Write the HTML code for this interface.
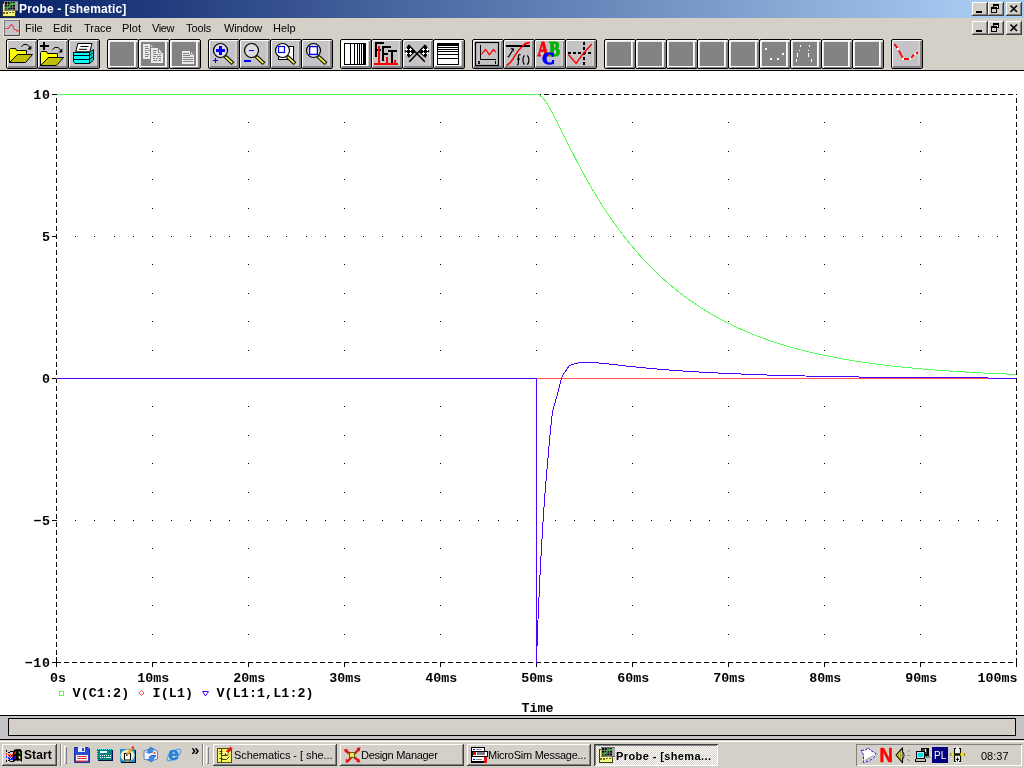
<!DOCTYPE html>
<html><head><meta charset="utf-8"><title>Probe - [shematic]</title>
<style>
html,body{margin:0;padding:0;}
body{width:1024px;height:768px;overflow:hidden;background:#fff;position:relative;font-family:"Liberation Sans",sans-serif;font-size:11px;color:#000;}
#root{position:absolute;left:0;top:0;width:1024px;height:768px;will-change:transform;}
.a{position:absolute;}
.ui{position:absolute;white-space:nowrap;font-size:11px;line-height:13px;}
#title{left:0;top:0;width:1024px;height:18px;background:linear-gradient(to right,#0a246a 0%,#0a246a 2%,#a6caf0 95%,#a6caf0 100%);}
#menubar{left:0;top:18px;width:1024px;height:52px;background:#d4d0c8;}
.cb{position:absolute;width:16px;height:14px;box-sizing:border-box;background:#d4d0c8;box-shadow:inset -1px -1px 0 #404040,inset 1px 1px 0 #fff,inset -2px -2px 0 #808080;}
.tb{position:absolute;top:39px;width:32px;height:30px;box-sizing:border-box;border:1px solid #000;border-radius:2px;background:#c6c3c6;box-shadow:inset 1px 1px 0 #fff,inset -2px -2px 0 #848288,inset -4px 0 0 #d4d0c8;}
.td{position:absolute;top:39px;width:32px;height:30px;box-sizing:border-box;border:1px solid #000;border-radius:2px;background:#848284;box-shadow:inset 1px 1px 0 #fff,inset 2px 2px 0 #e9e6e0,inset -2px -1px 0 #848284,inset 0 -2px 0 #fff,inset -3px 0 0 #e9e6e0,inset -4px 0 0 #fff;}
.tb svg,.td svg{position:absolute;left:-1px;top:-1px;width:32px;height:30px;overflow:visible;}
.m{font-family:"Liberation Mono",monospace;font-weight:bold;font-size:13.33px;}
svg text{font-family:"Liberation Mono",monospace;font-weight:bold;font-size:13.33px;fill:#000;}
.task{position:absolute;top:744px;height:22px;box-sizing:border-box;background:#d4d0c8;box-shadow:inset -1px -1px 0 #404040,inset 1px 1px 0 #fff,inset -2px -2px 0 #808080;}
.task span,.taskp span{position:absolute;top:4px;white-space:nowrap;font-size:11px;line-height:13px;}
.taskp{position:absolute;top:744px;height:22px;box-sizing:border-box;background:#fff;background-image:conic-gradient(#d4d0c8 25%,#fff 0 50%,#d4d0c8 0 75%,#fff 0);background-size:2px 2px;box-shadow:inset 1px 1px 0 #404040,inset -1px -1px 0 #fff,inset 2px 2px 0 #808080;}
</style></head>
<body>
<div id="root">
<div id="title" class="a"></div>
<div id="menubar" class="a"></div>
<svg class="a" style="left:2px;top:1px" width="16" height="16" viewBox="0 0 16 16">
<rect x="0.5" y="2.5" width="13" height="13" fill="#f8f880" stroke="#3a3a10" stroke-width="1"/>
<path d="M1 11.5h13M1 12.5h6" stroke="#6a6a20" stroke-width="1" stroke-dasharray="2 1"/>
<rect x="2" y="0" width="14" height="10" fill="#a4a4a4"/>
<path d="M2 0.5h14M2 9.5h14" stroke="#707070"/>
<rect x="3" y="1" width="10" height="7.5" fill="#000"/>
<path d="M5.5 1v7.5M8 1v7.5M10.5 1v7.5M3 3.5h10M3 6h10" stroke="#8a8a8a" stroke-width="0.8"/>
<polyline points="3.2,7.2 6.5,6.6 8,4.5 9,2.2 10.2,3.6 11.5,2.6 13,2" fill="none" stroke="#30d030" stroke-width="1.2"/>
<path d="M8.5 9.5l1 2l0.5 -2z" fill="#fff"/>
</svg>
<div class="ui" style="left:19px;top:3px;color:#fff;font-weight:bold;font-size:12px;letter-spacing:0.15px" id="ttext">Probe - [shematic]</div>
<div class="cb" style="left:972px;top:2px"><svg class="a" style="left:0;top:0" width="16" height="14" shape-rendering="crispEdges"><rect x="4" y="9" width="6" height="2" fill="#000"/></svg></div>
<div class="cb" style="left:988px;top:2px"><svg class="a" style="left:0;top:0" width="16" height="14" shape-rendering="crispEdges"><path d="M5 2h6v2h-6zM5 4h1v1h-1zM10 4h1v3h-1zM9 6h1v1h-1z" fill="#000"/><path d="M3 5h6v2h-6zM3 7h1v4h-1zM8 7h1v4h-1zM3 10h6v1h-6z" fill="#000"/></svg></div>
<div class="cb" style="left:1006px;top:2px"><svg class="a" style="left:0;top:0" width="16" height="14" shape-rendering="crispEdges"><path d="M4 3l6.5 6.5M10.5 3l-6.5 6.5" stroke="#000" stroke-width="1.6" shape-rendering="auto" transform="translate(0.5,0.5)"/></svg></div>
<div class="cb" style="left:972px;top:21px"><svg class="a" style="left:0;top:0" width="16" height="14" shape-rendering="crispEdges"><rect x="4" y="9" width="6" height="2" fill="#000"/></svg></div>
<div class="cb" style="left:988px;top:21px"><svg class="a" style="left:0;top:0" width="16" height="14" shape-rendering="crispEdges"><path d="M5 2h6v2h-6zM5 4h1v1h-1zM10 4h1v3h-1zM9 6h1v1h-1z" fill="#000"/><path d="M3 5h6v2h-6zM3 7h1v4h-1zM8 7h1v4h-1zM3 10h6v1h-6z" fill="#000"/></svg></div>
<div class="cb" style="left:1006px;top:21px"><svg class="a" style="left:0;top:0" width="16" height="14" shape-rendering="crispEdges"><path d="M4 3l6.5 6.5M10.5 3l-6.5 6.5" stroke="#000" stroke-width="1.6" shape-rendering="auto" transform="translate(0.5,0.5)"/></svg></div>
<div class="a" style="left:0;top:70px;width:1024px;height:1px;background:#000"></div>
<svg class="a" style="left:3px;top:19px" width="18" height="18" viewBox="-1 -1 18 18">
<rect x="-1" y="-1" width="18" height="18" fill="#e4e1da"/>
<rect x="0" y="0" width="16" height="16" fill="#c8c6ca"/>
<path d="M0 0.5h16M0.5 0v16" stroke="#7c7c7c"/>
<path d="M0 15.5h16M15.5 0v16" stroke="#484848"/>
<path d="M4 1v2M10 1v2M4 13v2M10 13v2M1 6.5h2M4 6.5h2M10 6.5h2M13 6.5h2M1 12h2M4 12h2M7 12h2" stroke="#bdbdc4" stroke-width="0.8"/>
<polyline points="1,8.5 4.5,8.5 6.3,5.6 7.5,4.4 9.3,6.2 9.4,8.6 10.5,9.5 12,9.6 13.5,11.5 14.8,10.3" fill="none" stroke="#e84048" stroke-width="1.1" stroke-linejoin="round"/>
</svg>
<div class="ui" id="m0" style="left:25px;top:22px;letter-spacing:0px">File</div>
<div class="ui" id="m1" style="left:53px;top:22px;letter-spacing:0px">Edit</div>
<div class="ui" id="m2" style="left:84px;top:22px;letter-spacing:0px">Trace</div>
<div class="ui" id="m3" style="left:122px;top:22px;letter-spacing:0px">Plot</div>
<div class="ui" id="m4" style="left:152px;top:22px;letter-spacing:-0.4px">View</div>
<div class="ui" id="m5" style="left:186px;top:22px;letter-spacing:-0.1px">Tools</div>
<div class="ui" id="m6" style="left:224px;top:22px;letter-spacing:-0.2px">Window</div>
<div class="ui" id="m7" style="left:273px;top:22px;letter-spacing:0px">Help</div>
<div class="tb" style="left:6px"><svg viewBox="0 0 32 30">
<path d="M3.5 23.5V10.5L4.5 9.5H9.5L10.5 11.5H20.5V15.5H11.5L3.5 23.5Z" fill="#ffff00" stroke="#000" stroke-width="1" stroke-linejoin="round"/>
<path d="M3.5 23.5L11.5 15.5H26.5L19.5 23.5Z" fill="#c0c000" stroke="#000" stroke-width="1" stroke-linejoin="round"/>
<path d="M15.3 7.7L17.8 5.5H21.2L24.3 9" fill="none" stroke="#000" stroke-width="1"/>
<path d="M21.3 10.6H25.3V6.6Z" fill="#000"/>
</svg></div>
<div class="tb" style="left:37px"><svg viewBox="0 0 32 30"><g transform="translate(0,3)">
<path d="M3.5 23.5V10.5L4.5 9.5H9.5L10.5 11.5H20.5V15.5H11.5L3.5 23.5Z" fill="#ffff00" stroke="#000" stroke-width="1" stroke-linejoin="round"/>
<path d="M3.5 23.5L11.5 15.5H26.5L19.5 23.5Z" fill="#c0c000" stroke="#000" stroke-width="1" stroke-linejoin="round"/>
<path d="M15.3 7.7L17.8 5.5H21.2L24.3 9" fill="none" stroke="#000" stroke-width="1"/>
<path d="M21.3 10.6H25.3V6.6Z" fill="#000"/>
</g><path d="M3 6h9v2h-9zM6 3h2v8h-2z" fill="#000" shape-rendering="crispEdges"/></svg></div>
<div class="tb" style="left:68px"><svg viewBox="0 0 32 30">
<path d="M5.5 13.5H21.5V24.5H7L5.5 22.5Z" fill="#00ffff" stroke="#000" stroke-width="1" stroke-linejoin="round"/>
<path d="M21.5 13.5L25.5 10.5V21L21.5 24.5Z" fill="#00d8d8" stroke="#000" stroke-width="1" stroke-linejoin="round"/>
<path d="M5.5 16.5H21.5L25.5 13.5M5.5 20.5H21.5L25.5 17.3" fill="none" stroke="#000" stroke-width="1"/>
<path d="M9.8 4.5H23.9L21.9 12.8H7.8Z" fill="#fff" stroke="#000" stroke-width="1" stroke-linejoin="round"/>
<path d="M12.5 7.5H20.5M11 10.3H19" stroke="#000" stroke-width="1"/>
</svg></div>
<div class="td" style="left:107px"></div>
<div class="td" style="left:138px"><svg viewBox="0 0 32 30" shape-rendering="crispEdges">
<path d="M5 5h7v15h-7z" fill="#eceae6"/>
<path d="M13 6l2 2h-2z" fill="#eceae6" shape-rendering="auto"/>
<path d="M7 7h3M7 9h4M7 11h2M10 11h2M7 13h3M7 15h4M7 17h3" stroke="#848284" stroke-width="1" transform="translate(0,0.5)"/>
<path d="M13 9h7v5h5v10h-12z" fill="#eceae6"/>
<path d="M21 10l3 3.5h-3z" fill="#eceae6" shape-rendering="auto"/>
<path d="M15 11h4M15 13h3M15 15h5M21 15h2M15 17h3M19 17h4M15 19h2M18 19h2M21 19h2M15 21h4M20 21h3" stroke="#848284" stroke-width="1" transform="translate(0,0.5)"/>
</svg></div>
<div class="td" style="left:169px"><svg viewBox="0 0 32 30" shape-rendering="crispEdges">
<path d="M13 12h8v4h4v9h-12z" fill="#eceae6"/>
<path d="M22 13l2.5 2.5h-2.5z" fill="#eceae6" shape-rendering="auto"/>
<path d="M14 14h6M14 16h7M14 18h10M14 20h10M14 22h10" stroke="#848284" stroke-width="1" transform="translate(0,0.5)"/>
</svg></div>
<div class="tb" style="left:208px"><svg viewBox="0 0 32 30">
<circle cx="12.5" cy="11.5" r="7" fill="#dcdce0" stroke="#000" stroke-width="1.2"/>
<path d="M17.2 17.4L25 24.6" stroke="#000" stroke-width="4" stroke-linecap="butt"/>
<path d="M17.6 17.8L24.4 24.1" stroke="#ffff40" stroke-width="1.8" stroke-linecap="butt"/>
<path d="M8 10h9v3h-9zM11 7h3v9h-3z" fill="#0000ff" shape-rendering="crispEdges"/><path d="M5 21h5v1h-5zM7 19h1v5h-1z" fill="#0000ff" shape-rendering="crispEdges"/></svg></div>
<div class="tb" style="left:239px"><svg viewBox="0 0 32 30">
<circle cx="12.5" cy="11.5" r="7" fill="#dcdce0" stroke="#000" stroke-width="1.2"/>
<path d="M17.2 17.4L25 24.6" stroke="#000" stroke-width="4" stroke-linecap="butt"/>
<path d="M17.6 17.8L24.4 24.1" stroke="#ffff40" stroke-width="1.8" stroke-linecap="butt"/>
<path d="M10 11h5v1h-5z" fill="#0000ff" shape-rendering="crispEdges"/><path d="M5 21h7v2h-7z" fill="#0000ff" shape-rendering="crispEdges"/></svg></div>
<div class="tb" style="left:270px"><svg viewBox="0 0 32 30">
<rect x="8.5" y="7.5" width="15" height="13" fill="#fff" stroke="#000" stroke-width="1"/>
<circle cx="12.5" cy="11.5" r="7" fill="#fff" stroke="#000" stroke-width="1.2"/>
<rect x="8.5" y="7.5" width="6" height="6" fill="#fff" stroke="#0000ff" stroke-width="1.2"/>
<path d="M17.2 17.4L25 24.6" stroke="#000" stroke-width="4" stroke-linecap="butt"/>
<path d="M17.6 17.8L24.4 24.1" stroke="#ffff40" stroke-width="1.8" stroke-linecap="butt"/>
</svg></div>
<div class="tb" style="left:301px"><svg viewBox="0 0 32 30">
<circle cx="12.5" cy="11.5" r="7" fill="#dcdce0" stroke="#000" stroke-width="1.2"/>
<rect x="8.6" y="7.6" width="7.8" height="7.8" fill="#fff" stroke="#0000ff" stroke-width="1.3"/>
<path d="M17.2 17.4L25 24.6" stroke="#000" stroke-width="4" stroke-linecap="butt"/>
<path d="M17.6 17.8L24.4 24.1" stroke="#ffff40" stroke-width="1.8" stroke-linecap="butt"/>
</svg></div>
<div class="tb" style="left:340px"><svg viewBox="0 0 32 30" shape-rendering="crispEdges">
<rect x="2" y="2" width="26" height="25" fill="#fff"/>
<rect x="4.5" y="4.5" width="21" height="21" fill="none" stroke="#000" stroke-width="1"/>
<path d="M10.5 5v20M14.5 5v20M17.5 5v20M19.5 5v20M21.5 5v20" stroke="#000" stroke-width="1"/>
<rect x="23" y="4" width="3" height="22" fill="#000"/>
</svg></div>
<div class="tb" style="left:371px"><svg viewBox="0 0 32 30" shape-rendering="crispEdges">
<path d="M4 3h9v2h-7v5h4v2h-4v6h-2z" fill="#000"/>
<path d="M11 7h9v2h-7v5h4v2h-4v6h-2z" fill="#000"/>
<path d="M17 11h9v2h-4v11h-2v-11h-3z" fill="#000"/>
<path d="M3 24h24v2h-24zM7 7h2v17h-2zM15 18h2v6h-2zM23 21h2v3h-2z" fill="#ff0000"/>
</svg></div>
<div class="tb" style="left:402px"><svg viewBox="0 0 32 30">
<path d="M7.3 22.8L23.3 6M22.8 22.8L6.6 6" stroke="#000" stroke-width="1.6" fill="none"/>
<path d="M6.5 5.5L2.6 11.5L6.5 19L13 13.2Z" fill="#000"/>
<path d="M23.5 5.5L27.4 11.5L23.5 19L17 13.2Z" fill="#000"/>
<path d="M4 9h1v3h-1zM3 10h3v1h-3zM8 9h1v3h-1zM7 10h3v1h-3zM4 13h1v3h-1zM3 14h3v1h-3zM8 13h1v3h-1zM7 14h3v1h-3zM21 9h1v3h-1zM20 10h3v1h-3zM25 9h1v3h-1zM24 10h3v1h-3zM21 13h1v3h-1zM20 14h3v1h-3zM25 13h1v3h-1zM24 14h3v1h-3z" fill="#fff" shape-rendering="crispEdges"/>
</svg></div>
<div class="tb" style="left:433px"><svg viewBox="0 0 32 30" shape-rendering="crispEdges">
<rect x="2" y="2" width="26" height="25" fill="#fff"/>
<rect x="4.5" y="4.5" width="21" height="21" fill="none" stroke="#000" stroke-width="1"/>
<rect x="4" y="4" width="22" height="3" fill="#000"/>
<path d="M5 8.5h20M5 10.5h20M5 12.5h20M5 15.5h20M5 19.5h20" stroke="#000" stroke-width="1"/>
</svg></div>
<div class="tb" style="left:472px"><svg viewBox="0 0 32 30">
<rect x="3.5" y="3.5" width="23" height="23" fill="none" stroke="#000" stroke-width="1.2"/>
<path d="M8.5 6v14.5H24" fill="none" stroke="#000" stroke-width="1" shape-rendering="crispEdges"/>
<polyline points="9.3,15.4 13.5,10.5 17.3,15.7 21.5,10.5 23.8,13.2" fill="none" stroke="#ff0000" stroke-width="1.2"/>
<path d="M6 22h2v3h-2zM23 22h1v3h-1z" fill="#000" shape-rendering="crispEdges"/>
<path d="M6.7 22.7h0.6v1.6h-0.6z" fill="#c6c3c6"/>
</svg></div>
<div class="tb" style="left:503px"><svg viewBox="0 0 32 30">
<path d="M3.4 26.4C7 25 9.5 21 12.1 16.3S15.5 10.8 18.6 8S23 4 26.6 3.4" fill="none" stroke="#ff0000" stroke-width="1.5"/>
<rect x="3" y="6" width="24" height="2" fill="#000" shape-rendering="crispEdges"/>
<path d="M19 7.6L22.4 4.4L26.6 3.4" fill="none" stroke="#ff0000" stroke-width="1.5"/>
<path d="M7.3 9.3h3.6v3.4z" fill="#000"/>
<path d="M9.4 11.6L5.8 17.6h-1.2" fill="none" stroke="#000" stroke-width="1.1"/>
<path d="M17.6 15.8c-1.6-0.6-2.2 0.4-2.2 1.6v6.6c0 1.4-0.4 2-1.6 2M14 20.2h3" fill="none" stroke="#000" stroke-width="1.2"/>
<path d="M21.4 16.4c-2 2.6-2 6.6 0 9.2M24.4 16.4c2 2.6 2 6.6 0 9.2" fill="none" stroke="#000" stroke-width="1.2"/>
</svg></div>
<div class="tb" style="left:534px"><svg viewBox="0 0 32 30">
<text x="0" y="0" transform="translate(3.4,16.6) scale(0.76,1)" style="font-family:'Liberation Serif',serif;font-weight:bold;font-size:20px;fill:#ff0000;stroke:#ff0000;stroke-width:1.1px">A</text>
<text x="0" y="0" transform="translate(15.2,16.6) scale(0.8,1)" style="font-family:'Liberation Serif',serif;font-weight:bold;font-size:20px;fill:#00b000;stroke:#00b000;stroke-width:1.1px">B</text>
<text x="0" y="0" transform="translate(8.2,24.6) scale(1.08,1)" style="font-family:'Liberation Serif',serif;font-weight:bold;font-size:16px;fill:#0000ff;stroke:#0000ff;stroke-width:1.4px">C</text>
</svg></div>
<div class="tb" style="left:565px"><svg viewBox="0 0 32 30">
<path d="M3 14h23" stroke="#000" stroke-width="2" stroke-dasharray="3 2" shape-rendering="crispEdges"/>
<path d="M19 3v23" stroke="#000" stroke-width="2" stroke-dasharray="3 2" shape-rendering="crispEdges"/>
<polyline points="3.4,15.4 11.1,24.4 18.6,14.1 26.9,5" fill="none" stroke="#ff0000" stroke-width="1.5"/>
</svg></div>
<div class="td" style="left:604px"></div>
<div class="td" style="left:635px"></div>
<div class="td" style="left:666px"></div>
<div class="td" style="left:697px"></div>
<div class="td" style="left:728px"></div>
<div class="td" style="left:759px"><svg viewBox="0 0 32 30" shape-rendering="crispEdges"><path d="M6 9h2v2h-2zM11 19h2v2h-2zM18 19h2v2h-2zM23 14h2v2h-2z" fill="#fff"/></svg></div>
<div class="td" style="left:790px"><svg viewBox="0 0 32 30" shape-rendering="crispEdges"><path d="M10 6h1v2h-1zM19 6h1v2h-1zM9 11h1v1h-1zM18 11h1v1h-1zM7 14h1v4h-1zM18 14h1v4h-1zM6 20h1v3h-1zM21 20h1v3h-1z" fill="#fff"/></svg></div>
<div class="td" style="left:821px"></div>
<div class="td" style="left:852px"></div>
<div class="tb" style="left:891px"><svg viewBox="0 0 32 30">
<path d="M3.4 5.2L6.6 9M7.8 11.3L11.6 18.6M20.4 18.6L23 15.4" stroke="#ff0000" stroke-width="1.8" fill="none"/>
<path d="M13 19h5v2h-5zM25 13h2v2h-2z" fill="#ff0000" shape-rendering="crispEdges"/>
<path d="M6 9h2v2h-2zM11 19h2v2h-2zM18 19h2v2h-2zM23 14h2v2h-2z" fill="#fff" shape-rendering="crispEdges"/>
</svg></div>
<svg class="a" style="left:0;top:71px" width="1024" height="644" viewBox="0 71 1024 644">
<g fill="#000" shape-rendering="crispEdges">
<path d="M75 236h1v1h-1zM75 378h1v1h-1zM75 520h1v1h-1zM94 236h1v1h-1zM94 378h1v1h-1zM94 520h1v1h-1zM114 236h1v1h-1zM114 378h1v1h-1zM114 520h1v1h-1zM133 236h1v1h-1zM133 378h1v1h-1zM133 520h1v1h-1zM152 122h1v1h-1zM152 151h1v1h-1zM152 179h1v1h-1zM152 208h1v1h-1zM152 236h1v1h-1zM152 264h1v1h-1zM152 293h1v1h-1zM152 321h1v1h-1zM152 350h1v1h-1zM152 378h1v1h-1zM152 406h1v1h-1zM152 435h1v1h-1zM152 463h1v1h-1zM152 492h1v1h-1zM152 520h1v1h-1zM152 548h1v1h-1zM152 577h1v1h-1zM152 605h1v1h-1zM152 634h1v1h-1zM171 236h1v1h-1zM171 378h1v1h-1zM171 520h1v1h-1zM190 236h1v1h-1zM190 378h1v1h-1zM190 520h1v1h-1zM210 236h1v1h-1zM210 378h1v1h-1zM210 520h1v1h-1zM229 236h1v1h-1zM229 378h1v1h-1zM229 520h1v1h-1zM248 122h1v1h-1zM248 151h1v1h-1zM248 179h1v1h-1zM248 208h1v1h-1zM248 236h1v1h-1zM248 264h1v1h-1zM248 293h1v1h-1zM248 321h1v1h-1zM248 350h1v1h-1zM248 378h1v1h-1zM248 406h1v1h-1zM248 435h1v1h-1zM248 463h1v1h-1zM248 492h1v1h-1zM248 520h1v1h-1zM248 548h1v1h-1zM248 577h1v1h-1zM248 605h1v1h-1zM248 634h1v1h-1zM267 236h1v1h-1zM267 378h1v1h-1zM267 520h1v1h-1zM286 236h1v1h-1zM286 378h1v1h-1zM286 520h1v1h-1zM306 236h1v1h-1zM306 378h1v1h-1zM306 520h1v1h-1zM325 236h1v1h-1zM325 378h1v1h-1zM325 520h1v1h-1zM344 122h1v1h-1zM344 151h1v1h-1zM344 179h1v1h-1zM344 208h1v1h-1zM344 236h1v1h-1zM344 264h1v1h-1zM344 293h1v1h-1zM344 321h1v1h-1zM344 350h1v1h-1zM344 378h1v1h-1zM344 406h1v1h-1zM344 435h1v1h-1zM344 463h1v1h-1zM344 492h1v1h-1zM344 520h1v1h-1zM344 548h1v1h-1zM344 577h1v1h-1zM344 605h1v1h-1zM344 634h1v1h-1zM363 236h1v1h-1zM363 378h1v1h-1zM363 520h1v1h-1zM382 236h1v1h-1zM382 378h1v1h-1zM382 520h1v1h-1zM402 236h1v1h-1zM402 378h1v1h-1zM402 520h1v1h-1zM421 236h1v1h-1zM421 378h1v1h-1zM421 520h1v1h-1zM440 122h1v1h-1zM440 151h1v1h-1zM440 179h1v1h-1zM440 208h1v1h-1zM440 236h1v1h-1zM440 264h1v1h-1zM440 293h1v1h-1zM440 321h1v1h-1zM440 350h1v1h-1zM440 378h1v1h-1zM440 406h1v1h-1zM440 435h1v1h-1zM440 463h1v1h-1zM440 492h1v1h-1zM440 520h1v1h-1zM440 548h1v1h-1zM440 577h1v1h-1zM440 605h1v1h-1zM440 634h1v1h-1zM459 236h1v1h-1zM459 378h1v1h-1zM459 520h1v1h-1zM478 236h1v1h-1zM478 378h1v1h-1zM478 520h1v1h-1zM498 236h1v1h-1zM498 378h1v1h-1zM498 520h1v1h-1zM517 236h1v1h-1zM517 378h1v1h-1zM517 520h1v1h-1zM536 122h1v1h-1zM536 151h1v1h-1zM536 179h1v1h-1zM536 208h1v1h-1zM536 236h1v1h-1zM536 264h1v1h-1zM536 293h1v1h-1zM536 321h1v1h-1zM536 350h1v1h-1zM536 378h1v1h-1zM536 406h1v1h-1zM536 435h1v1h-1zM536 463h1v1h-1zM536 492h1v1h-1zM536 520h1v1h-1zM536 548h1v1h-1zM536 577h1v1h-1zM536 605h1v1h-1zM536 634h1v1h-1zM555 236h1v1h-1zM555 378h1v1h-1zM555 520h1v1h-1zM574 236h1v1h-1zM574 378h1v1h-1zM574 520h1v1h-1zM594 236h1v1h-1zM594 378h1v1h-1zM594 520h1v1h-1zM613 236h1v1h-1zM613 378h1v1h-1zM613 520h1v1h-1zM632 122h1v1h-1zM632 151h1v1h-1zM632 179h1v1h-1zM632 208h1v1h-1zM632 236h1v1h-1zM632 264h1v1h-1zM632 293h1v1h-1zM632 321h1v1h-1zM632 350h1v1h-1zM632 378h1v1h-1zM632 406h1v1h-1zM632 435h1v1h-1zM632 463h1v1h-1zM632 492h1v1h-1zM632 520h1v1h-1zM632 548h1v1h-1zM632 577h1v1h-1zM632 605h1v1h-1zM632 634h1v1h-1zM651 236h1v1h-1zM651 378h1v1h-1zM651 520h1v1h-1zM670 236h1v1h-1zM670 378h1v1h-1zM670 520h1v1h-1zM690 236h1v1h-1zM690 378h1v1h-1zM690 520h1v1h-1zM709 236h1v1h-1zM709 378h1v1h-1zM709 520h1v1h-1zM728 122h1v1h-1zM728 151h1v1h-1zM728 179h1v1h-1zM728 208h1v1h-1zM728 236h1v1h-1zM728 264h1v1h-1zM728 293h1v1h-1zM728 321h1v1h-1zM728 350h1v1h-1zM728 378h1v1h-1zM728 406h1v1h-1zM728 435h1v1h-1zM728 463h1v1h-1zM728 492h1v1h-1zM728 520h1v1h-1zM728 548h1v1h-1zM728 577h1v1h-1zM728 605h1v1h-1zM728 634h1v1h-1zM747 236h1v1h-1zM747 378h1v1h-1zM747 520h1v1h-1zM766 236h1v1h-1zM766 378h1v1h-1zM766 520h1v1h-1zM786 236h1v1h-1zM786 378h1v1h-1zM786 520h1v1h-1zM805 236h1v1h-1zM805 378h1v1h-1zM805 520h1v1h-1zM824 122h1v1h-1zM824 151h1v1h-1zM824 179h1v1h-1zM824 208h1v1h-1zM824 236h1v1h-1zM824 264h1v1h-1zM824 293h1v1h-1zM824 321h1v1h-1zM824 350h1v1h-1zM824 378h1v1h-1zM824 406h1v1h-1zM824 435h1v1h-1zM824 463h1v1h-1zM824 492h1v1h-1zM824 520h1v1h-1zM824 548h1v1h-1zM824 577h1v1h-1zM824 605h1v1h-1zM824 634h1v1h-1zM843 236h1v1h-1zM843 378h1v1h-1zM843 520h1v1h-1zM862 236h1v1h-1zM862 378h1v1h-1zM862 520h1v1h-1zM882 236h1v1h-1zM882 378h1v1h-1zM882 520h1v1h-1zM901 236h1v1h-1zM901 378h1v1h-1zM901 520h1v1h-1zM920 122h1v1h-1zM920 151h1v1h-1zM920 179h1v1h-1zM920 208h1v1h-1zM920 236h1v1h-1zM920 264h1v1h-1zM920 293h1v1h-1zM920 321h1v1h-1zM920 350h1v1h-1zM920 378h1v1h-1zM920 406h1v1h-1zM920 435h1v1h-1zM920 463h1v1h-1zM920 492h1v1h-1zM920 520h1v1h-1zM920 548h1v1h-1zM920 577h1v1h-1zM920 605h1v1h-1zM920 634h1v1h-1zM939 236h1v1h-1zM939 378h1v1h-1zM939 520h1v1h-1zM958 236h1v1h-1zM958 378h1v1h-1zM958 520h1v1h-1zM978 236h1v1h-1zM978 378h1v1h-1zM978 520h1v1h-1zM997 236h1v1h-1zM997 378h1v1h-1zM997 520h1v1h-1z"/>
</g>
<g stroke="#000" stroke-width="1" fill="none" shape-rendering="crispEdges">
<path d="M56.5 98V662" stroke-dasharray="5 3"/>
<path d="M1016.5 98V662" stroke-dasharray="5 3"/>
<path d="M56 94.5H1017" stroke-dasharray="5 3"/>
<path d="M56 662.5H1017" stroke-dasharray="5 3"/>
<path d="M52 94.5H57"/>
<path d="M52 236.5H57"/>
<path d="M52 378.5H57"/>
<path d="M52 520.5H57"/>
<path d="M52 662.5H57"/>
<path d="M56.5 662V667"/>
<path d="M152.5 662V667"/>
<path d="M248.5 662V667"/>
<path d="M344.5 662V667"/>
<path d="M440.5 662V667"/>
<path d="M536.5 662V667"/>
<path d="M632.5 662V667"/>
<path d="M728.5 662V667"/>
<path d="M824.5 662V667"/>
<path d="M920.5 662V667"/>
<path d="M1016.5 662V667"/>
<path d="M56.5 657V667"/>
</g>
<polyline fill="none" stroke="#55ff55" stroke-width="1" shape-rendering="crispEdges" points="56.5,94.5 539.5,94.5 539.9,95.4 542.3,97.4 544.7,100.2 547.1,103.6 549.5,107.6 551.9,111.8 554.3,116.3 556.7,121.0 561.5,130.6 566.3,140.3 571.1,149.9 575.9,159.3 580.7,168.5 585.5,177.3 590.3,185.8 595.1,193.9 599.9,201.8 604.7,209.3 609.5,216.5 614.3,223.3 623.9,236.3 633.5,248.1 643.1,259.0 652.7,268.9 662.3,278.1 671.9,286.4 681.5,294.1 691.1,301.1 700.7,307.6 710.3,313.5 719.9,318.9 729.5,323.9 739.1,328.4 748.7,332.6 758.3,336.4 767.9,339.9 777.5,343.1 787.1,346.1 796.7,348.8 806.3,351.3 815.9,353.5 825.5,355.6 835.1,357.5 844.7,359.3 854.3,360.9 863.9,362.3 873.5,363.7 883.1,364.9 892.7,366.1 902.3,367.1 911.9,368.0 921.5,368.9 931.1,369.7 940.7,370.4 950.3,371.1 959.9,371.7 969.5,372.3 979.1,372.8 988.7,373.3 998.3,373.7 1007.9,374.1 1016.5,374.4"/>
<path d="M56 378.5H1016" stroke="#ff5555" stroke-width="1" fill="none" shape-rendering="crispEdges"/>
<polyline fill="none" stroke="#5000ff" stroke-width="1" shape-rendering="crispEdges" points="56.5,378.5 536.5,378.5 536.5,662.5 537.5,631.0 538.5,609.0 539.5,586.0 540.5,565.5 541.5,547.0 542.5,531.0 543.5,514.5 544.5,499.0 545.5,486.5 546.5,475.0 547.5,463.5 548.5,452.0 549.5,441.0 550.5,429.5 551.5,420.0 552.5,413.0 553.5,408.0 554.5,404.5 555.5,401.0 556.5,397.5 557.5,394.0 558.5,390.5 559.5,386.0 560.5,381.5 561.5,378.0 562.5,375.5 563.5,374.0 569.5,365.5 572.5,364.3 575.5,363.6 579.5,362.5 594.5,362.5 598.9,363.0 603.7,363.5 613.3,364.5 622.9,365.6 632.5,366.7 642.1,367.6 651.7,368.5 666.1,369.8 680.5,370.8 694.9,371.8 709.3,372.6 728.5,373.5 747.7,374.3 766.9,375.0 786.1,375.6 805.3,376.0 824.5,376.4 843.7,376.8 872.5,377.2 901.3,377.5 930.1,377.7 958.9,377.9 987.7,378.0 1016.5,378.1"/>
<text x="50.6" y="99.0" text-anchor="end" style="letter-spacing:0.7px">10</text>
<text x="50.6" y="241.0" text-anchor="end" style="letter-spacing:0.7px">5</text>
<text x="50.6" y="383.0" text-anchor="end" style="letter-spacing:0.7px">0</text>
<text x="50.6" y="525.0" text-anchor="end" style="letter-spacing:0.7px">−5</text>
<text x="50.6" y="667.0" text-anchor="end" style="letter-spacing:0.7px">−10</text>
<text x="58.0" y="682" text-anchor="middle">0s</text>
<text x="153.2" y="682" text-anchor="middle">10ms</text>
<text x="249.2" y="682" text-anchor="middle">20ms</text>
<text x="345.2" y="682" text-anchor="middle">30ms</text>
<text x="441.2" y="682" text-anchor="middle">40ms</text>
<text x="537.2" y="682" text-anchor="middle">50ms</text>
<text x="633.2" y="682" text-anchor="middle">60ms</text>
<text x="729.2" y="682" text-anchor="middle">70ms</text>
<text x="825.2" y="682" text-anchor="middle">80ms</text>
<text x="921.2" y="682" text-anchor="middle">90ms</text>
<text x="997.5" y="682" text-anchor="middle">100ms</text>
<rect x="59.5" y="691.5" width="4" height="4" fill="none" stroke="#55ff55" shape-rendering="crispEdges"/>
<text x="72.6" y="697" style="letter-spacing:0.1px">V(C1:2)</text>
<path d="M141.5 690.5l2.5 2.5l-2.5 2.5l-2.5 -2.5z" fill="none" stroke="#ff5555" stroke-width="1"/>
<text x="152.6" y="697" style="letter-spacing:0.1px">I(L1)</text>
<path d="M202.5 691.5h6l-3 4.5z" fill="none" stroke="#5000ff" stroke-width="1"/>
<text x="216.5" y="697" style="letter-spacing:0.1px">V(L1:1,L1:2)</text>
<text x="537.4" y="712" text-anchor="middle">Time</text>
</svg>
<div class="a" style="left:0;top:715px;width:1024px;height:1px;background:#000"></div>
<div class="a" style="left:0;top:716px;width:1024px;height:23px;background:#c4c3c7"></div>
<div class="a" style="left:8px;top:718px;width:1008px;height:18px;box-sizing:border-box;border:1px solid #000;background:#d4d0c8"></div>
<div class="a" style="left:0;top:739px;width:1024px;height:1px;background:#000"></div>
<div class="a" style="left:0;top:740px;width:1024px;height:28px;background:#d4d0c8;box-shadow:inset 0 1px 0 #d4d0c8, inset 0 2px 0 #fff"></div>
<div class="task" style="left:2px;width:55px"><span style="left:22px;top:5px;font-weight:bold;font-size:12px;letter-spacing:0.1px" id="start">Start</span><svg class="a" style="left:3px;top:4px" width="18" height="16" viewBox="0 0 18 16">
<path d="M8 3.5C10 0.5 12 0.5 13 1.5C14.5 0.5 16 1 17 3.5V14.5C16 12.5 14.5 12 13 13C12 12 10 12 8 14.5Z" fill="#000"/>
<path d="M9.6 4.2L11.3 2.6L11 5.6L9.4 6.8Z" fill="#ff2020"/>
<path d="M13.4 2.6L15.2 4.2L15.3 6.8L13.6 5.6Z" fill="#20d020"/>
<path d="M9.4 8.4L11 7.4L10.8 10.2L9.3 11.6Z" fill="#2020ff"/>
<path d="M13.6 7.4L15.3 8.4L15.4 11.6L13.8 10.2Z" fill="#ffff20"/>
<g shape-rendering="crispEdges">
<path d="M1 2h1v2h-1zM1 12h1v2h-1zM3 4h2v1h-2zM5 3h3v1h-3zM3 12h2v1h-2zM5 13h3v1h-3zM4 7h1v1h-1zM6 7h1v1h-1zM4 10h1v1h-1zM6 10h1v1h-1z" fill="#000"/>
<path d="M1 5h1v2h-1zM3 6h1v2h-1zM5 6h1v1h-1zM7 6h1v2h-1zM4 8h4v1h-4z" fill="#ff2020"/>
<path d="M1 8h1v2h-1zM3 9h1v2h-1zM5 9h1v1h-1zM7 9h1v2h-1zM4 11h4v1h-4z" fill="#2020ff"/>
</g>
</svg>
</div>
<div class="a" style="left:60px;top:744px;width:1px;height:22px;background:#808080"></div><div class="a" style="left:61px;top:744px;width:1px;height:22px;background:#fff"></div><div class="a" style="left:64px;top:746px;width:3px;height:18px;box-sizing:border-box;background:#d4d0c8;box-shadow:inset 1px 1px 0 #fff,inset -1px -1px 0 #808080"></div>
<div class="a" style="left:202px;top:744px;width:1px;height:22px;background:#808080"></div><div class="a" style="left:203px;top:744px;width:1px;height:22px;background:#fff"></div><div class="a" style="left:206px;top:746px;width:3px;height:18px;box-sizing:border-box;background:#d4d0c8;box-shadow:inset 1px 1px 0 #fff,inset -1px -1px 0 #808080"></div>
<div class="a" style="left:74px;top:747px;width:16px;height:16px"><svg width="16" height="16" viewBox="0 0 16 16" style="position:absolute;left:0;top:0">
<path d="M0.5 0.5H14L15.5 2V15.5H0.5Z" fill="#2848d8" stroke="#1830a0" stroke-width="1"/>
<rect x="4" y="0" width="7" height="5" fill="#e8e8f0"/>
<rect x="8" y="1" width="2" height="3" fill="#2848d8"/>
<rect x="2" y="8" width="12" height="6" fill="#fff"/>
<path d="M3 10h10M3 12h10" stroke="#e03048" stroke-width="1" shape-rendering="crispEdges" transform="translate(0,-0.5)"/>
<rect x="2" y="13.5" width="12" height="1.5" fill="#c83040"/>
</svg></div>
<div class="a" style="left:97px;top:747px;width:16px;height:16px"><svg width="16" height="16" viewBox="0 0 16 16" style="position:absolute;left:0;top:0" shape-rendering="crispEdges">
<rect x="1" y="3" width="15" height="11" fill="#001040"/>
<rect x="0" y="2" width="15" height="11" fill="#008080"/>
<path d="M0.5 12.5V2.5H15" fill="none" stroke="#40f0f0" stroke-width="1" stroke-dasharray="1 1"/>
<rect x="3" y="4" width="7" height="2" fill="#fff"/>
<path d="M3 8.5h11M3 10.5h11" stroke="#fff" stroke-width="1" stroke-dasharray="1 1"/>
<rect x="10" y="10" width="4" height="1" fill="#fff"/>
</svg></div>
<div class="a" style="left:120px;top:747px;width:16px;height:16px"><svg width="17" height="17" viewBox="0 0 17 17" style="position:absolute;left:0;top:-1px;overflow:visible">
<rect x="1" y="4" width="15" height="13" fill="#000"/>
<rect x="0" y="3" width="15" height="13" fill="#2888c8"/>
<ellipse cx="7.5" cy="9.5" rx="7" ry="6" fill="#f0ecc0"/>
<rect x="4.5" y="7.5" width="6" height="6.5" fill="#fff" stroke="#000" stroke-width="1"/>
<path d="M7 8.5L13 1.5" stroke="#f0a020" stroke-width="2.2"/>
<path d="M12.4 2.2L13.6 0.8" stroke="#e02020" stroke-width="2.2"/>
<rect x="6" y="8.5" width="1.4" height="1.4" fill="#000"/>
</svg></div>
<div class="a" style="left:143px;top:747px;width:16px;height:16px"><svg width="16" height="17" viewBox="0 0 16 17" style="position:absolute;left:0;top:-1px;overflow:visible">
<path d="M1 5L8 2.5L14.5 5V13L8 15L1 13Z" fill="#f4f4fc" stroke="#6878c0" stroke-width="1"/>
<path d="M3.5 6.5L7.5 1L11.5 3.5L9 4.2L10 6L6.5 7.2Z" fill="#3890e8" stroke="#2060c0" stroke-width="0.6"/>
<path d="M12.5 10L8.5 16L4.5 13.5L7 12.6L6 10.8L10 9.6Z" fill="#3890e8" stroke="#2060c0" stroke-width="0.6"/>
<rect x="10.5" y="6" width="2" height="2" fill="#e06030"/>
<path d="M8 9.5h5" stroke="#4050c0" stroke-width="1"/>
</svg></div>
<div class="a" style="left:166px;top:747px;width:16px;height:16px"><svg width="17" height="17" viewBox="0 0 17 17" style="position:absolute;left:0;top:0;overflow:visible">
<ellipse cx="8" cy="8" rx="8.4" ry="3.4" transform="rotate(-38 8 8)" fill="none" stroke="#58a8f0" stroke-width="1.3"/>
<text x="2.2" y="13.4" style="font-family:'Liberation Sans',sans-serif;font-weight:bold;font-size:19px;fill:#2080e0;stroke:#2080e0;stroke-width:0.7px">e</text>
</svg></div>
<div class="ui" id="chev" style="left:191px;top:742px;font-weight:bold;font-size:15px;line-height:16px">»</div>
<div class="task" style="left:213px;width:124px"><svg class="a" style="left:4px;top:3px;overflow:visible" width="16" height="16" viewBox="0 0 16 16">
<rect x="0.5" y="1.5" width="14" height="14" fill="#f8f860" stroke="#505010" stroke-width="1"/>
<path d="M4.5 2v13M2.5 4.5h3M2.5 6.5h3M4.5 8.5h6M2.5 11.5h3M4.5 12.5h5l3-3M10 8.5l2-2" fill="none" stroke="#303010" stroke-width="0.9"/>
<path d="M8.6 7.4L10.2 4.6" stroke="#fff" stroke-width="2"/>
<path d="M10 5.2L14.6 0.6" stroke="#e01818" stroke-width="3"/>
<path d="M8.2 8L9 6.6" stroke="#000" stroke-width="1.2"/>
</svg><span id="tk0" style="left:21px;top:5px;letter-spacing:-0.05px">Schematics - [ she...</span></div>
<div class="task" style="left:340px;width:124px"><svg class="a" style="left:4px;top:3px;overflow:visible" width="17" height="16" viewBox="0 0 17 16">
<path d="M1.5 3.5L15 14M3 15L15.5 1.5" stroke="#e81010" stroke-width="2.3" fill="none"/>
<path d="M0 2l4.5 0.5L1 5.5zM16.5 0l-1 4.5l-3.2-3zM1.5 16l0.5-4.5l3.4 3zM16.5 15.5l-4.5-0.5l3-3z" fill="#e81010"/>
<rect x="5.5" y="5.5" width="5" height="5" fill="#e8e848" stroke="#606020" stroke-width="1"/>
</svg><span id="tk1" style="left:21px;top:5px;letter-spacing:-0.3px">Design Manager</span></div>
<div class="task" style="left:467px;width:124px"><svg class="a" style="left:4px;top:3px;overflow:visible" width="17" height="16" viewBox="0 0 17 16" shape-rendering="crispEdges">
<rect x="0.5" y="0.5" width="13" height="15" fill="#fff" stroke="#000" stroke-width="1"/>
<rect x="0" y="0" width="14" height="1" fill="#000"/>
<rect x="0" y="14" width="13" height="2" fill="#000"/>
<rect x="2" y="2" width="2" height="1" fill="#0000ff"/><rect x="5" y="2" width="6" height="1" fill="#a0a0a0"/>
<rect x="13" y="10" width="3" height="6" fill="#e01010"/>
<rect x="1.5" y="4.5" width="15" height="5" fill="#fff" stroke="#000" stroke-width="1"/>
<rect x="2" y="5" width="3" height="3" fill="#ff0000"/><rect x="6" y="5" width="8" height="3" fill="#808080"/>
<rect x="2" y="12" width="2" height="1" fill="#0000ff"/><rect x="5" y="12" width="6" height="1" fill="#808080"/>
</svg><span id="tk2" style="left:21px;top:5px;letter-spacing:-0.25px">MicroSim Message...</span></div>
<div class="taskp" style="left:594px;width:124px"><svg class="a" style="left:5px;top:3px" width="16" height="16" viewBox="0 0 16 16">
<rect x="0.5" y="2.5" width="13" height="13" fill="#f8f880" stroke="#3a3a10" stroke-width="1"/>
<path d="M1 11.5h13M1 12.5h6" stroke="#6a6a20" stroke-width="1" stroke-dasharray="2 1"/>
<rect x="2" y="0" width="14" height="10" fill="#a4a4a4"/>
<path d="M2 0.5h14M2 9.5h14" stroke="#707070"/>
<rect x="3" y="1" width="10" height="7.5" fill="#000"/>
<path d="M5.5 1v7.5M8 1v7.5M10.5 1v7.5M3 3.5h10M3 6h10" stroke="#8a8a8a" stroke-width="0.8"/>
<polyline points="3.2,7.2 6.5,6.6 8,4.5 9,2.2 10.2,3.6 11.5,2.6 13,2" fill="none" stroke="#30d030" stroke-width="1.2"/>
<path d="M8.5 9.5l1 2l0.5 -2z" fill="#fff"/>
</svg><span id="tk3" style="left:22px;top:6px;font-weight:bold;letter-spacing:0.4px">Probe - [shema...</span></div>
<div class="a" style="left:856px;top:744px;width:166px;height:22px;box-sizing:border-box;box-shadow:inset 1px 1px 0 #808080,inset -1px -1px 0 #fff"></div>
<div class="a" style="left:860px;top:747px;width:16px;height:16px"><svg width="17" height="16" viewBox="0 0 17 16" style="position:absolute;left:0;top:0;overflow:visible">
<path d="M1 3.5L6 3L8 0.5L10 3L16 6.5C15 11 10 14.5 3.5 15.5L3.5 8Z" fill="#fff" stroke="#2020e0" stroke-width="1" stroke-dasharray="3 1.2"/>
<path d="M5 14.5C9 13.5 13 10.5 14.5 7.5L4.5 13Z" fill="#b0b0b8"/>
</svg></div>
<div class="a" style="left:879px;top:747px;width:16px;height:16px"><svg width="16" height="16" viewBox="0 0 16 16" style="position:absolute;left:0;top:0;overflow:visible">
<text x="0.4" y="14.9" textLength="13.4" lengthAdjust="spacingAndGlyphs" style="font-family:'Liberation Sans',sans-serif;font-weight:bold;font-size:19.5px;fill:#ff0000;stroke:#ff0000;stroke-width:0.5px">N</text>
</svg></div>
<div class="a" style="left:895px;top:747px;width:16px;height:16px"><svg width="17" height="16" viewBox="0 0 17 16" style="position:absolute;left:0;top:0;overflow:visible">
<path d="M1 8L7.5 0.8V15.6Z" fill="#e8e020" stroke="#000" stroke-width="1.1" stroke-linejoin="round"/>
<path d="M7.5 4.5C9.5 6 9.5 10.5 7.5 12" fill="#d0d0d0" stroke="#000" stroke-width="1"/>
<path d="M3.5 6.2v4M5.5 4v8" stroke="#908800" stroke-width="0.8"/>
<path d="M12 5L15 3M12 8.5h3.5M12 12L15 14" stroke="#8c8c8c" stroke-width="1"/>
</svg></div>
<div class="a" style="left:914px;top:747px;width:16px;height:16px"><svg width="16" height="16" viewBox="0 0 16 16" style="position:absolute;left:0;top:0;overflow:visible" shape-rendering="crispEdges">
<rect x="7" y="1" width="8" height="8" fill="#000"/>
<rect x="8" y="2" width="5" height="5" fill="#404040"/>
<rect x="11" y="2" width="1" height="3" fill="#fff"/>
<rect x="9" y="9" width="7" height="2" fill="#808080"/>
<rect x="2" y="4" width="9" height="8" fill="#d8d8d8"/>
<path d="M2.5 4.5h8v7h-8z" fill="none" stroke="#000" stroke-width="1"/>
<rect x="4" y="6" width="5" height="4" fill="#00e0e0"/>
<rect x="1" y="12" width="11" height="2" fill="#c0c0c0"/>
<path d="M1 14.5h11M1.5 12v2M11.5 12v2" stroke="#000" stroke-width="1"/>
</svg></div>
<div class="a" style="left:932px;top:747px;width:16px;height:16px"><svg width="16" height="16" viewBox="0 0 16 16" style="position:absolute;left:0;top:0;overflow:visible">
<rect x="0" y="0" width="16" height="16" fill="#000080"/>
<text x="2.1" y="12" textLength="12.2" lengthAdjust="spacingAndGlyphs" style="font-family:'Liberation Sans',sans-serif;font-weight:normal;font-size:11px;fill:#fff">PL</text>
</svg></div>
<div class="a" style="left:950px;top:747px;width:16px;height:16px"><svg width="16" height="16" viewBox="0 0 16 16" style="position:absolute;left:0;top:0;overflow:visible">
<rect x="4" y="0.5" width="7" height="15.5" fill="#f0f0f0"/>
<path d="M6 1.5H4.5V14.5H6M9 1.5H10.5V14.5H9" fill="none" stroke="#000" stroke-width="1.1"/>
<path d="M0.5 7.5H15" stroke="#000" stroke-width="2.4"/>
<circle cx="2.6" cy="7.5" r="1.7" fill="#f0e020"/><circle cx="12.4" cy="7.5" r="2.2" fill="#f0e020"/>
<path d="M6 12.5h3M7.5 10.5v4" stroke="#000" stroke-width="1"/>
</svg></div>
<div class="ui" id="clock" style="left:981px;top:750px">08:37</div>
</div>
</body></html>
